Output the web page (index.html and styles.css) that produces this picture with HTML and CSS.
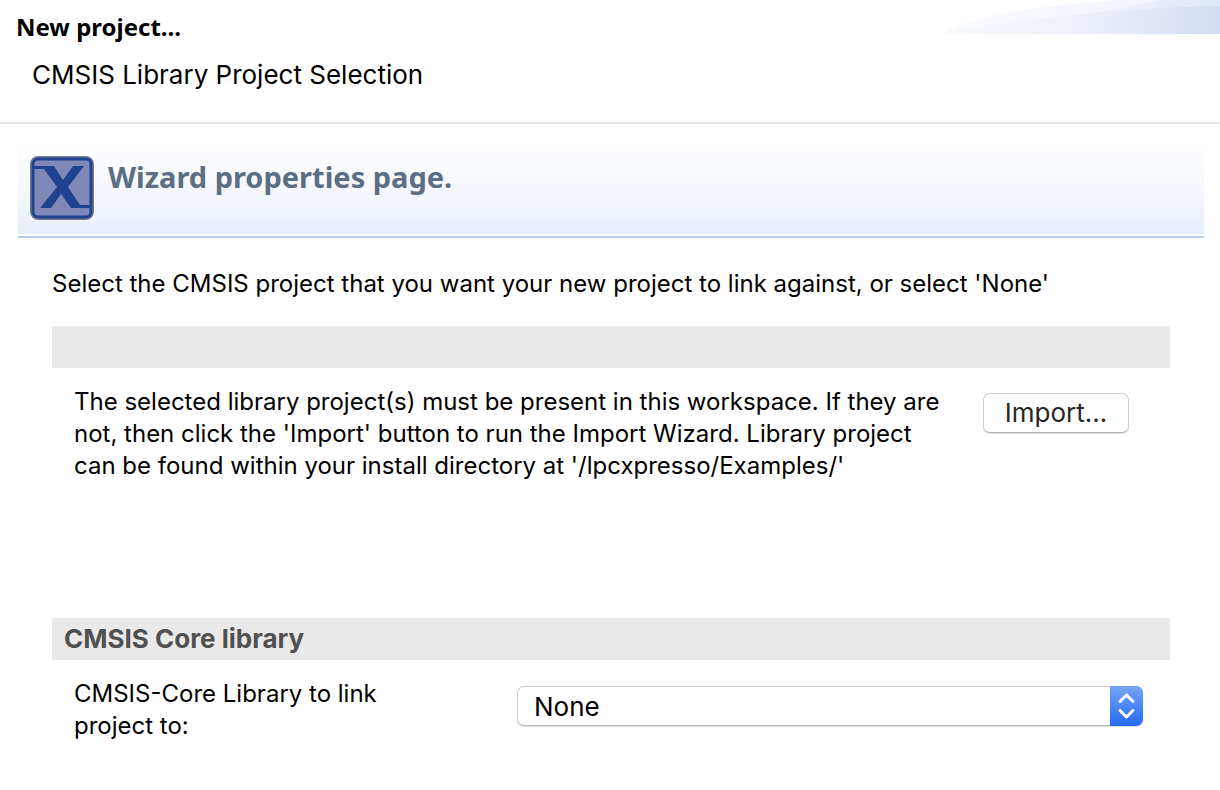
FILE: index.html
```
<!DOCTYPE html>
<html lang="en">
<head>
	<meta charset="utf-8">
	<title>New project...</title>
	<link rel="stylesheet" href="styles.css">
</head>
<body>
	<header class="banner">
		<div class="banner-text">
			<h1>New project...</h1>
			<p>CMSIS Library Project Selection</p>
		</div>
		<svg class="swoosh" width="276" height="34" viewBox="0 0 276 34" aria-hidden="true">
			<defs>
				<linearGradient id="back" x1="0" x2="1" y1="0" y2="0">
					<stop offset="0" stop-color="#f8fafe"/>
					<stop offset="0.7" stop-color="#f3f6fd"/>
					<stop offset="1" stop-color="#eef3fc"/>
				</linearGradient>
				<linearGradient id="middle" x1="0" x2="1" y1="0" y2="0">
					<stop offset="0" stop-color="#f1f4fc"/>
					<stop offset="1" stop-color="#dfe6f7"/>
				</linearGradient>
				<linearGradient id="front" x1="0" x2="1" y1="0" y2="0">
					<stop offset="0" stop-color="#f8f9fd"/>
					<stop offset="0.35" stop-color="#f2f4fa"/>
					<stop offset="0.7" stop-color="#e4e9f7"/>
					<stop offset="1" stop-color="#d3dbf2"/>
				</linearGradient>
			</defs>
			<path fill="url(#back)" d="M0 34C10 22 78 6 178 0H276V34z"/>
			<path fill="url(#middle)" d="M150 13C172 9 192 5 216 0H276V34H150z"/>
			<path fill="url(#front)" d="M0 34C20 26 100 18 150 13C190 9 230 7 276 6V34z"/>
		</svg>
	</header>

	<main class="page">
		<div class="form-head">
			<svg class="logo" width="64" height="64" viewBox="0 0 64 64" aria-hidden="true">
				<path fill="#fff" d="M0 0H64V64H0z"/>
				<rect x="1" y="1" width="62" height="62" rx="7" fill="#8088b8" stroke="#777b93" stroke-width="2"/>
				<rect x="3" y="3" width="58" height="58" rx="5" fill="none" stroke="#1f4390" stroke-width="3"/>
				<path fill="#1f4390" d="M3 10H24L33 24L43 10H54L38 31L50 49H61V52H41L31 38L21 52H10L27 31L14 13H3z"/>
			</svg>
			<h2>Wizard properties page.</h2>
		</div>

		<form class="content">
			<p class="intro">Select the CMSIS project that you want your new project to link against, or select 'None'</p>

			<section class="section import">
				<div class="section-bar"></div>
				<div class="import-row">
					<p>The selected library project(s) must be present in this workspace. If they are not, then click the 'Import' button to run the Import Wizard. Library project can be found within your install directory at '/lpcxpresso/Examples/'</p>
					<button type="button" class="btn">Import...</button>
				</div>
			</section>

			<section class="section">
				<h3 class="section-bar">CMSIS Core library</h3>
				<div class="library-row">
					<label for="library">CMSIS-Core Library to link project to:</label>
					<div class="select-wrap">
						<select id="library">
							<option>None</option>
						</select>
						<svg class="arrows" width="33" height="40" viewBox="0 0 33 40" aria-hidden="true">
							<path fill="none" stroke="#fff" stroke-width="3" stroke-linecap="round" stroke-linejoin="round" d="M10 15.500L16.500 9L23 15.500M10 24.500L16.500 31L23 24.500"/>
						</svg>
					</div>
				</div>
			</section>
		</form>
	</main>
</body>
</html>
```
FILE: styles.css
```
body {
  margin: 0;
  background-color: #fff;
  color: #000;
  font-family: Inter, "Liberation Sans", sans-serif;
  font-size: 24px;
  line-height: 32px;
}

h1, h2, h3, p {
  margin: 0;
}

/* Top banner */
.banner {
  display: flex;
  justify-content: space-between;
  align-items: flex-start;
  min-height: 122px;
  border-bottom: 2px solid #e5e5e5;
}

.banner-text {
  padding: 11px 16px;
}

.banner h1 {
  font-family: "Noto Sans", "Open Sans", sans-serif;
  font-size: 24px;
  line-height: 32px;
}

.banner p {
  padding: 16px 16px 0;
  font-size: 26px;
}

.swoosh {
  display: block;
}

/* Form heading */
.page {
  padding: 16px 16px 16px 18px;
}

.form-head {
  display: flex;
  gap: 14px;
  padding: 16px 12px;
  background-image: linear-gradient(#fff, #f3f6fd 60%, #e6edf9);
  border-bottom: 2px solid #b4cdf0;
  box-shadow: inset 0 -2px #fff;
}

.form-head h2 {
  padding-top: 3px;
  color: #5c6e84;
  font-family: "Noto Sans", "Open Sans", sans-serif;
  font-size: 29px;
  line-height: 36px;
}

.logo {
  flex: none;
}

.content {
  padding: 30px 34px 0;
}

.intro {
  margin-bottom: 26px;
}

/* Sections */
.section-bar {
  box-sizing: border-box;
  height: 42px;
  padding: 0 12px;
  background-color: #e9e9e9;
  border-radius: 2px 2px 0 0;
  color: #505050;
  font-size: 26px;
  line-height: 42px;
}

.import {
  min-height: 292px;
}

.import-row {
  display: flex;
  justify-content: space-between;
  align-items: flex-start;
  gap: 40px;
  padding: 18px 41px 0 22px;
}

.import-row p {
  flex: 1;
}

.btn {
  width: 146px;
  height: 40px;
  margin-top: 7px;
  padding: 0 0 2px;
  background-color: #fff;
  border: 1px solid #cdcdcd;
  border-bottom-color: #b5b5b5;
  border-radius: 7px;
  box-shadow: 0 1px 1px #dddddd;
  color: #262626;
  font-family: inherit;
  font-size: 26px;
}

/* Library drop-down */
.library-row {
  display: flex;
  align-items: flex-start;
  gap: 103px;
  padding: 18px 27px 0 22px;
}

.library-row label {
  width: 340px;
}

.select-wrap {
  position: relative;
  flex: 1;
  margin-top: 8px;
}

.select-wrap select {
  display: block;
  appearance: none;
  width: 100%;
  height: 40px;
  padding: 0 48px 0 16px;
  background-color: #fff;
  border: 1px solid #cdcdcd;
  border-bottom-color: #b5b5b5;
  border-radius: 7px;
  box-shadow: 0 1px 1px #dddddd;
  color: #000;
  font-family: inherit;
  font-size: 26px;
}

.arrows {
  position: absolute;
  top: 0;
  right: 0;
  background-image: linear-gradient(#75a5f5, #256af5);
  border-radius: 0 7px 7px 0;
  pointer-events: none;
}
```
